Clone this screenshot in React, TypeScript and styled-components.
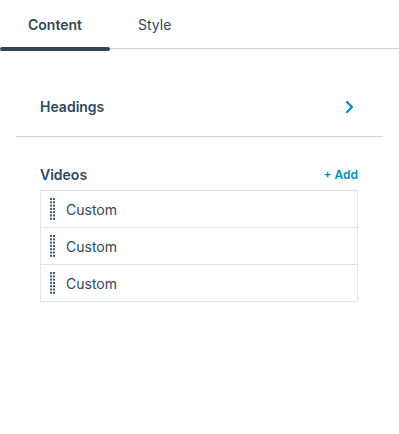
import React, {useState} from 'react';
import styled, {createGlobalStyle} from 'styled-components';

const GlobalStyle = createGlobalStyle`
  body {
    margin: 0;
    background: #fff;
    font-family: 'Inter', 'Noto Sans', sans-serif;
    color: #33475b;
  }
`;

const tabs = ['Content', 'Style'];
const videos = ['Custom', 'Custom', 'Custom'];

const DragHandle = () => (
  <svg width="5" height="22" viewBox="0 0 5 22">
    {[0, 1, 2, 3, 4, 5, 6].map(i => (
      <React.Fragment key={i}>
        <rect x="0" y={i * 3.3} width="2" height="2" fill="#425b76" />
        <rect x="3" y={i * 3.3} width="2" height="2" fill="#425b76" />
      </React.Fragment>
    ))}
  </svg>
);

const App = () => {
  const [active, setActive] = useState(0);

  return (
    <>
      <GlobalStyle />
      <Panel>
        <TabBar>
          {tabs.map((t, i) => (
            <Tab key={t} isActive={active === i} onClick={() => setActive(i)}>
              {t}
            </Tab>
          ))}
        </TabBar>
        <SectionRow>
          <SectionTitle>Headings</SectionTitle>
          <svg width="10" height="14" viewBox="0 0 10 14">
            <path
              d="M3 2 L8 7 L3 12"
              fill="none"
              stroke="#0091ae"
              strokeWidth="2.2"
              strokeLinecap="round"
              strokeLinejoin="round"
            />
          </svg>
        </SectionRow>
        <Divider />
        <Field>
          <FieldHeader>
            <SectionTitle>Videos</SectionTitle>
            <AddButton>+ Add</AddButton>
          </FieldHeader>
          <List>
            {videos.map((v, i) => (
              <Item key={i}>
                <DragHandle />
                <ItemLabel>{v}</ItemLabel>
              </Item>
            ))}
          </List>
        </Field>
      </Panel>
    </>
  );
};
export default App;

const Panel = styled.div`
  width: 399px;
  height: 434px;
  background: #fff;
`;

const TabBar = styled.div`
  display: flex;
  height: 48px;
  border-bottom: 1px solid #cbd6e2;
`;

const Tab = styled.button<{isActive?: boolean}>`
  position: relative;
  border: none;
  background: none;
  padding: 0 28px;
  font-family: inherit;
  font-size: 14px;
  font-weight: ${({isActive}) => (isActive ? 600 : 400)};
  color: #33475b;
  cursor: pointer;
  &::after {
    content: '';
    display: ${({isActive}) => (isActive ? 'block' : 'none')};
    position: absolute;
    left: 0;
    right: 0;
    bottom: -3px;
    height: 4px;
    border-radius: 2px;
    background: #33475b;
  }
`;

const SectionRow = styled.div`
  display: flex;
  align-items: center;
  justify-content: space-between;
  height: 59px;
  padding: 28px 45px 0 40px;
`;

const SectionTitle = styled.span`
  font-size: 14px;
  font-weight: 600;
  color: #33475b;
`;

const Divider = styled.div`
  height: 1px;
  margin: 0 16px;
  background: #cbd6e2;
`;

const Field = styled.div`
  padding: 28px 41px 0 40px;
`;

const FieldHeader = styled.div`
  display: flex;
  align-items: center;
  justify-content: space-between;
  height: 18px;
  margin-bottom: 7px;
`;

const AddButton = styled.button`
  border: none;
  background: none;
  padding: 0;
  font-family: inherit;
  font-size: 12px;
  font-weight: 600;
  color: #0091ae;
  cursor: pointer;
`;

const List = styled.div`
  display: flex;
  flex-direction: column;
  border: 1px solid #dfe3eb;
`;

const Item = styled.div`
  display: flex;
  align-items: center;
  gap: 11px;
  height: 36px;
  padding-left: 9px;
  & + & {
    border-top: 1px solid #dfe3eb;
  }
`;

const ItemLabel = styled.span`
  font-size: 14px;
  color: #33475b;
`;
